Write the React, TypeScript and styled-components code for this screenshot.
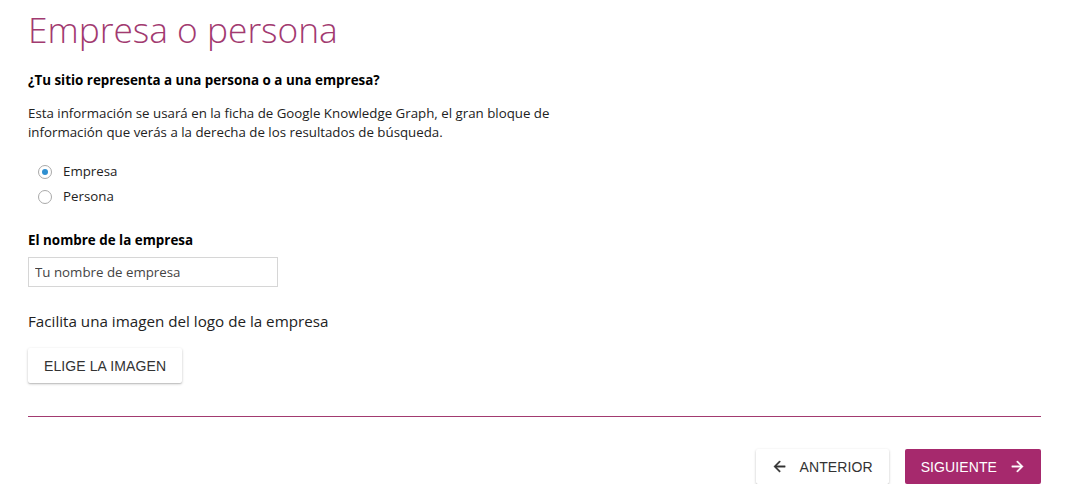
import { useState } from "react";
import styled, { createGlobalStyle } from "styled-components";

const GlobalStyle = createGlobalStyle`
  body {
    margin: 0;
    background: #ffffff;
    font-family: "Open Sans", "Noto Sans", sans-serif;
    color: #222;
  }
`;

const Page = styled.div`
  padding: 0 26px 0 28px;
`;

const Title = styled.h1`
  margin: 0;
  padding-top: 6px;
  font-size: 35.3px;
  font-weight: 300;
  line-height: 47px;
  color: #a23a70;
`;

const Question = styled.p`
  margin: 19px 0 0;
  font-size: 13.4px;
  line-height: 17px;
  font-weight: 700;
  color: #000;
`;

const Help = styled.p`
  margin: 15px 0 0;
  width: 560px;
  font-size: 13.3px;
  line-height: 19px;
  color: #222;
`;

const RadioGroup = styled.div`
  display: flex;
  flex-direction: column;
  gap: 6px;
  margin: 20px 0 0 10px;
`;

const RadioRow = styled.label`
  display: flex;
  align-items: center;
  gap: 11px;
  font-size: 13.3px;
  line-height: 19px;
  color: #222;
  cursor: pointer;
`;

const RadioDot = styled.span<{ $checked: boolean }>`
  width: 14px;
  height: 14px;
  box-sizing: border-box;
  border-radius: 50%;
  border: 1px solid #a9a9a9;
  display: flex;
  align-items: center;
  justify-content: center;
  &::after {
    content: "";
    width: 6px;
    height: 6px;
    border-radius: 50%;
    background: ${({ $checked }) => ($checked ? "#2f8fd0" : "transparent")};
  }
`;

const FieldLabel = styled.p`
  margin: 26px 0 0;
  font-size: 13.4px;
  line-height: 17px;
  font-weight: 700;
  color: #000;
`;

const TextInput = styled.input`
  display: block;
  margin-top: 8px;
  width: 250px;
  height: 30px;
  box-sizing: border-box;
  border: 1px solid #d6d6d6;
  padding: 0 6px;
  font-family: "Open Sans", "Noto Sans", sans-serif;
  font-size: 13.3px;
  color: #222;
  &::placeholder {
    color: #444;
  }
`;

const LogoLabel = styled.p`
  margin: 24px 0 0;
  font-size: 15.2px;
  line-height: 20px;
  color: #222;
`;

const Button = styled.button<{ $primary?: boolean }>`
  display: inline-flex;
  align-items: center;
  justify-content: center;
  gap: 13px;
  height: 35px;
  padding: 0 16px;
  border: none;
  border-radius: 2px;
  font-family: "Liberation Sans", Arial, sans-serif;
  font-size: 14px;
  letter-spacing: 0.1px;
  text-transform: uppercase;
  cursor: pointer;
  background: ${({ $primary }) => ($primary ? "#a6296d" : "#ffffff")};
  color: ${({ $primary }) => ($primary ? "#ffffff" : "#333")};
  box-shadow: ${({ $primary }) =>
    $primary ? "none" : "0 1px 3px rgba(0,0,0,0.2), 0 1px 1px rgba(0,0,0,0.12)"};
  svg {
    width: 17px;
    height: 17px;
    margin: 0 -1px;
  }
`;

const UploadRow = styled.div`
  margin-top: 17px;
`;

const Divider = styled.hr`
  margin: 33px 0 0;
  border: none;
  border-top: 1px solid #a23a70;
`;

const Footer = styled.div`
  display: flex;
  justify-content: flex-end;
  gap: 16px;
  margin-top: 32px;
`;

const Arrow = ({ dir }: { dir: "left" | "right" }) => (
  <svg viewBox="0 0 24 24" fill="currentColor" stroke="currentColor" strokeWidth="0.6">
    {dir === "left" ? (
      <path d="M20 11H7.83l5.59-5.59L12 4l-8 8 8 8 1.41-1.41L7.83 13H20v-2z" />
    ) : (
      <path d="M12 4l-1.41 1.41L16.17 11H4v2h12.17l-5.58 5.59L12 20l8-8z" />
    )}
  </svg>
);

const App = () => {
  const [kind, setKind] = useState("empresa");

  return (
    <Page>
      <GlobalStyle />
      <Title>Empresa o persona</Title>
      <Question>¿Tu sitio representa a una persona o a una empresa?</Question>
      <Help>
        Esta información se usará en la ficha de Google Knowledge Graph, el gran bloque de
        información que verás a la derecha de los resultados de búsqueda.
      </Help>
      <RadioGroup>
        <RadioRow onClick={() => setKind("empresa")}>
          <RadioDot $checked={kind === "empresa"} />
          Empresa
        </RadioRow>
        <RadioRow onClick={() => setKind("persona")}>
          <RadioDot $checked={kind === "persona"} />
          Persona
        </RadioRow>
      </RadioGroup>
      <FieldLabel>El nombre de la empresa</FieldLabel>
      <TextInput placeholder="Tu nombre de empresa" />
      <LogoLabel>Facilita una imagen del logo de la empresa</LogoLabel>
      <UploadRow>
        <Button>Elige la imagen</Button>
      </UploadRow>
      <Divider />
      <Footer>
        <Button>
          <Arrow dir="left" />
          Anterior
        </Button>
        <Button $primary>
          Siguiente
          <Arrow dir="right" />
        </Button>
      </Footer>
    </Page>
  );
};

export default App;
